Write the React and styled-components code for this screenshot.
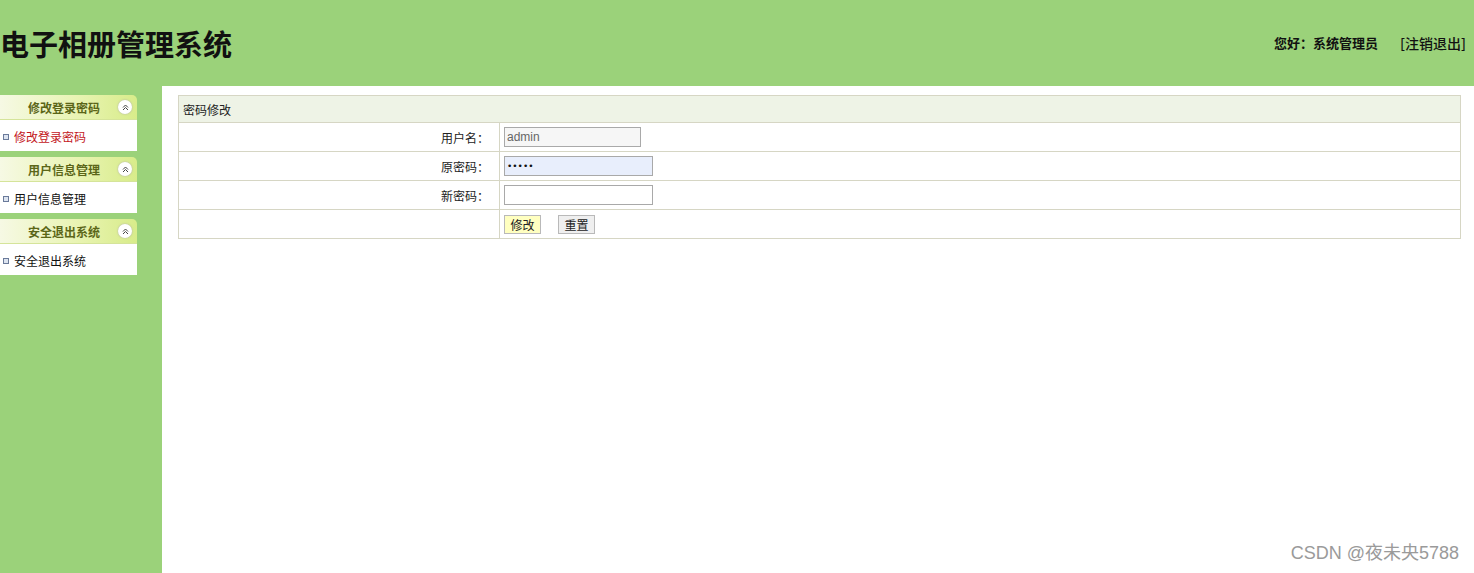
import React from 'react';
import styled, { createGlobalStyle } from 'styled-components';

const Global = createGlobalStyle`
  html, body { margin: 0; padding: 0; }
  body {
    font-family: "Noto Sans CJK SC", "Liberation Sans", sans-serif;
    font-size: 12px;
    color: #222;
    background: #9bd27a;
  }
`

const Page = styled.div`
  width: 1474px;
  height: 573px;
  display: flex;
  flex-direction: column;
  background: #9bd27a;
  overflow: hidden;
  position: relative;
`

const Top = styled.div`
  height: 86px;
  display: flex;
  align-items: center;
  justify-content: space-between;
  padding-right: 8px;
`

const Title = styled.h1`
  margin: 0;
  font-size: 29px;
  font-weight: 700;
  color: #111;
  line-height: 1.2;
`

const Welcome = styled.div`
  display: flex;
  gap: 22px;
  font-size: 13px;
  font-weight: 700;
  color: #111;
  span.out { font-weight: 500; font-size: 14px; }
`

const Body = styled.div`
  flex: 1;
  display: flex;
`

const Side = styled.div`
  width: 162px;
  padding-top: 9px;
  display: flex;
  flex-direction: column;
  gap: 6px;
`

const Panel = styled.div`
  width: 137px;
`

const PanelHead = styled.div`
  height: 25px;
  border-top-right-radius: 5px;
  background: linear-gradient(to right, #f6f9e4 0%, #e9f4b4 55%, #d8ec8a 100%);
  display: flex;
  align-items: center;
  justify-content: flex-end;
  padding-right: 5px;
  gap: 18px;
  font-weight: 700;
  color: #5b6618;
  font-size: 12px;
  box-sizing: border-box;
  border-bottom: 1px solid #d5e49a;
`

const Toggle = styled.span`
  width: 14px;
  height: 14px;
  border-radius: 50%;
  background: #fff;
  box-shadow: 0 0 2px #aaa;
  display: flex;
  align-items: center;
  justify-content: center;
`

const Item = styled.div`
  height: 31px;
  background: #fff;
  display: flex;
  align-items: center;
  padding-left: 3px;
  padding-top: 2px;
  gap: 5px;
  color: ${p => (p.active ? '#c3161c' : '#111')};
  font-size: 12px;
  box-sizing: border-box;
`

const Bullet = styled.span`
  width: 4px;
  height: 4px;
  border: 1px solid #6a7a9a;
  background: #dde4f0;
`

const Main = styled.div`
  flex: 1;
  background: #fff;
  padding: 9px 13px 0 16px;
`

const Table = styled.div`
  border: 1px solid #d6d6c4;
  border-bottom: none;
`

const HeadRow = styled.div`
  height: 26px;
  background: #eef3e6;
  display: flex;
  align-items: center;
  padding-left: 4px;
  border-bottom: 1px solid #d6d6c4;
`

const Row = styled.div`
  height: 28px;
  display: grid;
  grid-template-columns: 321px 1fr;
  border-bottom: 1px solid #d6d6c4;
`

const Label = styled.div`
  display: flex;
  align-items: center;
  justify-content: flex-end;
  padding-right: 10px;
  border-right: 1px solid #d6d6c4;
`

const Cell = styled.div`
  display: flex;
  align-items: center;
  padding-left: 4px;
  gap: 17px;
`

const Input = styled.input`
  box-sizing: border-box;
  width: ${p => p.w}px;
  height: 20px;
  border: 1px solid #a9a9a9;
  background: ${p => p.bg || '#fff'};
  font-family: "Liberation Sans", sans-serif;
  font-size: 12px;
  color: #666;
  padding: 0 2px;
  margin: 0;
  outline: none;
  &[type='password'] {
    font-size: 9px;
    letter-spacing: 0px;
    color: #111;
    font-family: "DejaVu Sans", sans-serif;
  }
`

const Btn = styled.button`
  height: 19px;
  width: 37px;
  border: 1px solid #b9b9b9;
  background: ${p => p.bg};
  font-family: inherit;
  font-size: 12px;
  color: #222;
  padding: 0;
`

const Mark = styled.div`
  position: absolute;
  right: 15px;
  bottom: 9px;
  font-size: 18px;
  color: #9a9a9a;
  font-family: "Liberation Sans", "Noto Sans CJK SC", sans-serif;
`

const Chevron = () => (
  <svg width="7" height="7" viewBox="0 0 7 7">
    <path d="M1 3.5 L3.5 1 L6 3.5 M1 6 L3.5 3.5 L6 6" fill="none" stroke="#444" strokeWidth="1" />
  </svg>
)

const menus = [
  { title: '修改登录密码', item: '修改登录密码', active: true },
  { title: '用户信息管理', item: '用户信息管理' },
  { title: '安全退出系统', item: '安全退出系统' },
]

const App = () => {
  return (
    <Page>
      <Global />
      <Top>
        <Title>电子相册管理系统</Title>
        <Welcome>
          <span>您好：系统管理员</span>
          <span className="out">[注销退出]</span>
        </Welcome>
      </Top>
      <Body>
        <Side>
          {menus.map(m => (
            <Panel key={m.title}>
              <PanelHead>
                <span>{m.title}</span>
                <Toggle><Chevron /></Toggle>
              </PanelHead>
              <Item active={m.active}>
                <Bullet />
                {m.item}
              </Item>
            </Panel>
          ))}
        </Side>
        <Main>
          <Table>
            <HeadRow>密码修改</HeadRow>
            <Row>
              <Label>用户名：</Label>
              <Cell><Input w={137} bg="#f6f6f6" defaultValue="admin" readOnly /></Cell>
            </Row>
            <Row>
              <Label>原密码：</Label>
              <Cell><Input w={149} bg="#e8eefc" type="password" defaultValue="admin" /></Cell>
            </Row>
            <Row>
              <Label>新密码：</Label>
              <Cell><Input w={149} type="password" /></Cell>
            </Row>
            <Row>
              <Label />
              <Cell>
                <Btn bg="#ffffc0">修改</Btn>
                <Btn bg="#efefef">重置</Btn>
              </Cell>
            </Row>
          </Table>
        </Main>
      </Body>
      <Mark>CSDN @夜未央5788</Mark>
    </Page>
  );
};

export default App;
